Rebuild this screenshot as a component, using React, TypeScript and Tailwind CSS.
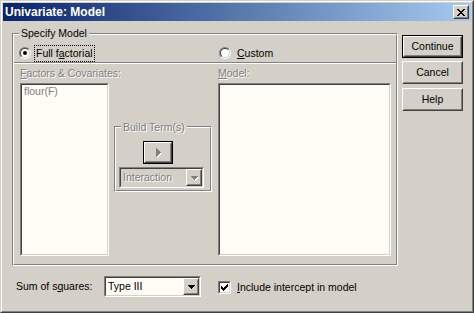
import type { ReactNode } from "react";

const RAISED_OUT = "border border-t-white border-l-white border-r-[#404040] border-b-[#404040]";
const RAISED_IN = "border border-t-[#d4d0c8] border-l-[#d4d0c8] border-r-[#808080] border-b-[#808080]";
const SUNK_OUT = "border border-t-[#808080] border-l-[#808080] border-r-white border-b-white";
const SUNK_IN = "border border-t-[#404040] border-l-[#404040] border-r-[#d4d0c8] border-b-[#d4d0c8]";
const ETCH_OUT = "border border-t-[#808080] border-l-[#808080] border-r-white border-b-white";
const ETCH_IN = "border border-t-white border-l-white border-r-[#808080] border-b-[#808080]";
const DIS = "text-[#808080] [text-shadow:1px_1px_0_#ffffff]";

function U({ children }: { children: ReactNode }) {
  return <span className="underline decoration-1 underline-offset-[1px]">{children}</span>;
}

function CloseButton() {
  const rows = ["11000011", "01100110", "00111100", "00011000", "00111100", "01100110", "11000011"];
  return (
    <div className={`h-[14px] w-[16px] bg-[#d4d0c8] ${RAISED_OUT}`}>
      <div className={`flex h-full w-full items-center justify-center ${RAISED_IN}`}>
        <svg width="8" height="7" viewBox="0 0 8 7" shapeRendering="crispEdges">
          {rows.map((r, y) =>
            r.split("").map((c, x) => (c === "1" ? <rect key={`${x}-${y}`} x={x} y={y} width="1" height="1" fill="#000" /> : null))
          )}
        </svg>
      </div>
    </div>
  );
}

function Radio({ checked }: { checked?: boolean }) {
  return (
    <span className={`block h-[12px] w-[12px] shrink-0 rounded-full ${SUNK_OUT}`}>
      <span className={`flex h-full w-full items-center justify-center rounded-full bg-white ${SUNK_IN}`}>
        {checked && <span className="block h-[4px] w-[4px] rounded-full bg-black" />}
      </span>
    </span>
  );
}

function Checkbox() {
  const tops = [2, 3, 4, 3, 2, 1, 0];
  return (
    <span className={`block h-[13px] w-[13px] shrink-0 ${SUNK_OUT}`}>
      <span className={`flex h-full w-full items-center justify-center bg-white ${SUNK_IN}`}>
        <svg width="7" height="7" viewBox="0 0 7 7" shapeRendering="crispEdges">
          {tops.map((t, i) => (
            <rect key={i} x={i} y={t} width="1" height="3" fill="#000" />
          ))}
        </svg>
      </span>
    </span>
  );
}

function DownArrow({ color }: { color: string }) {
  return (
    <svg width="7" height="4" viewBox="0 0 7 4" shapeRendering="crispEdges">
      <rect x="0" y="0" width="7" height="1" fill={color} />
      <rect x="1" y="1" width="5" height="1" fill={color} />
      <rect x="2" y="2" width="3" height="1" fill={color} />
      <rect x="3" y="3" width="1" height="1" fill={color} />
    </svg>
  );
}

function Combo({ text, disabled, className }: { text: string; disabled?: boolean; className: string }) {
  return (
    <div className={`h-[21px] ${SUNK_OUT} ${className}`}>
      <div className={`flex h-full w-full items-center justify-between ${SUNK_IN} ${disabled ? "bg-[#d4d0c8]" : "bg-[#fffcf6]"}`}>
        <span className={`whitespace-nowrap pl-[2px] ${disabled ? DIS : ""}`}>{text}</span>
        <div className={`h-[17px] w-[16px] shrink-0 bg-[#d4d0c8] ${RAISED_OUT}`}>
          <div className={`flex h-full w-full items-center justify-center ${RAISED_IN}`}>
            {disabled ? (
              <span className="relative block h-[4px] w-[7px]">
                <span className="absolute left-px top-px">
                  <DownArrow color="#fff" />
                </span>
                <span className="absolute left-0 top-0">
                  <DownArrow color="#808080" />
                </span>
              </span>
            ) : (
              <DownArrow color="#000" />
            )}
          </div>
        </div>
      </div>
    </div>
  );
}

function PushButton({ label, isDefault }: { label: string; isDefault?: boolean }) {
  const face = (
    <div className={`h-full w-full ${RAISED_OUT}`}>
      <div className={`flex h-full w-full items-center justify-center ${RAISED_IN}`}>{label}</div>
    </div>
  );
  return isDefault ? (
    <div className="h-[23px] w-[61px] border border-black">{face}</div>
  ) : (
    <div className="h-[23px] w-[61px]">{face}</div>
  );
}

function RightArrowGlyph() {
  const cols = [9, 7, 5, 3, 1];
  const draw = (color: string, dx: number) =>
    cols.map((h, i) => <rect key={`${color}${i}`} x={i + dx} y={(9 - h) / 2 + dx} width="1" height={h} fill={color} />);
  return (
    <svg width="6" height="10" viewBox="0 0 6 10" shapeRendering="crispEdges">
      {draw("#ffffff", 1)}
      {draw("#808080", 0)}
    </svg>
  );
}

export default function App() {
  return (
    <div className="h-[313px] w-[474px] select-none border border-t-[#d4d0c8] border-l-[#d4d0c8] border-r-[#404040] border-b-[#404040] bg-[#d4d0c8] font-['Liberation_Sans',Arial,sans-serif] text-[10.5px] leading-[13px] text-black">
      <div className="flex h-full flex-col border border-t-white border-l-white border-r-[#808080] border-b-[#808080] p-px">
        <div className="flex h-[18px] items-center justify-between bg-[linear-gradient(to_right,#0a246a,#a6caf0)] pl-[2px] pr-[2px]">
          <span className="text-[12px] font-bold leading-[14px] text-white">Univariate: Model</span>
          <CloseButton />
        </div>

        <div className="flex pl-[9px] pt-[12px]">
          {/* Specify Model */}
          <div className={`relative h-[233px] w-[386px] ${ETCH_OUT}`}>
            <span className="absolute -top-[7px] left-[6px] bg-[#d4d0c8] px-[2px]">Specify Model</span>
            <div className={`flex h-full w-full flex-col ${ETCH_IN}`}>
              <div className="flex h-[27px] items-center pt-[9px]">
                <div className="flex w-[205px] items-center pl-[5px]">
                  <Radio checked />
                  <span className="ml-[3px] border border-dotted border-black px-px py-px">
                    Full f<U>a</U>ctorial
                  </span>
                </div>
                <div className="flex items-center">
                  <Radio />
                  <span className="ml-[6px]">
                    <U>C</U>ustom
                  </span>
                </div>
              </div>
              <div className="h-px bg-[#808080]" />
              <div className="h-px bg-white" />

              <div className="flex flex-1 pt-[3px]">
                <div className="ml-[6px] flex w-[89px] flex-col">
                  <span className={`whitespace-nowrap ${DIS}`}>
                    <U>F</U>actors &amp; Covariates:
                  </span>
                  <div className={`mt-[3px] h-[173px] ${SUNK_OUT}`}>
                    <div className={`h-full w-full bg-[#fffcf6] pl-[2px] text-[#808080] ${SUNK_IN}`}>flour(F)</div>
                  </div>
                </div>

                <div className="ml-[5px] w-[98px] pt-[59px]">
                  <div className={`relative h-[66px] ${ETCH_OUT}`}>
                    <span className={`absolute -top-[6px] left-[6px] whitespace-nowrap bg-[#d4d0c8] px-[2px] ${DIS}`}>Build Term(s)</span>
                    <div className={`flex h-full w-full flex-col ${ETCH_IN}`}>
                      <div className="ml-[27px] mt-[13px] h-[23px] w-[30px] border border-black">
                        <div className={`h-full w-full ${RAISED_OUT}`}>
                          <div className={`flex h-full w-full items-center justify-center pl-px ${RAISED_IN}`}>
                            <RightArrowGlyph />
                          </div>
                        </div>
                      </div>
                      <Combo text="Interaction" disabled className="ml-[3px] mt-[3px] w-[85px]" />
                    </div>
                  </div>
                </div>

                <div className="ml-[6px] flex w-[173px] flex-col">
                  <span className={DIS}>
                    <U>M</U>odel:
                  </span>
                  <div className={`mt-[3px] h-[173px] ${SUNK_OUT}`}>
                    <div className={`h-full w-full bg-[#fffcf6] ${SUNK_IN}`} />
                  </div>
                </div>
              </div>
            </div>
          </div>

          <div className="ml-[4px] flex flex-col pt-[2px]">
            <PushButton label="Continue" isDefault />
            <div className="mt-[3px]">
              <PushButton label="Cancel" />
            </div>
            <div className="mt-[4px]">
              <PushButton label="Help" />
            </div>
          </div>
        </div>

        <div className="mt-[10px] flex h-[21px] items-center pl-[13px]">
          <span className="w-[88px] whitespace-nowrap">
            Sum of s<U>q</U>uares:
          </span>
          <Combo text="Type III" className="w-[97px]" />
          <span className="ml-[17px] mt-[2px]">
            <Checkbox />
          </span>
          <span className="ml-[6px] mt-[2px] whitespace-nowrap">
            <U>I</U>nclude intercept in model
          </span>
        </div>
      </div>
    </div>
  );
}
